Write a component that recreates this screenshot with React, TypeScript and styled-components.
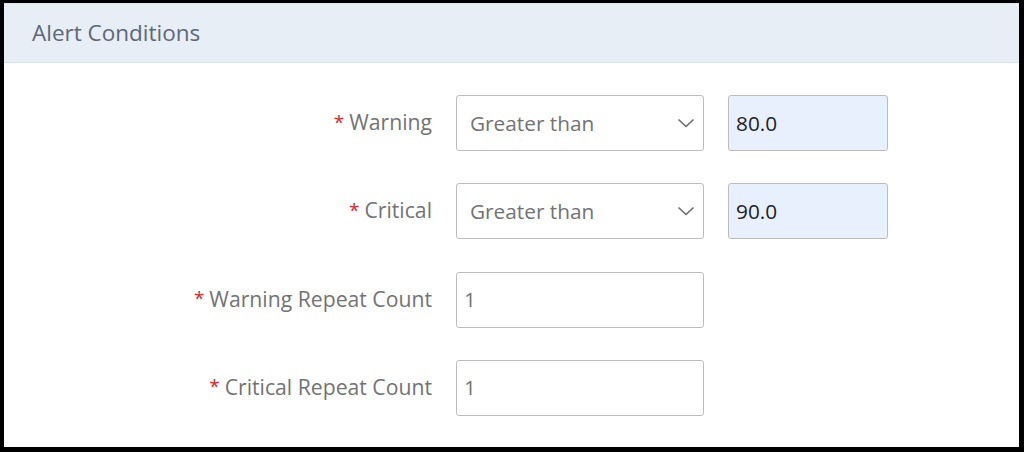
import styled, { createGlobalStyle } from "styled-components";

const GlobalStyle = createGlobalStyle`
  html, body {
    margin: 0;
    padding: 0;
    background: #000000;
  }
  * {
    box-sizing: border-box;
  }
`;

const Frame = styled.div`
  width: 1024px;
  height: 452px;
  padding: 3px 5px 5px 4px;
  background: #000000;
`;

const Panel = styled.div`
  height: 100%;
  background: #ffffff;
  display: flex;
  flex-direction: column;
  font-family: "Open Sans", "Noto Sans", sans-serif;
`;

const Header = styled.div`
  height: 60px;
  display: flex;
  align-items: center;
  padding-left: 28px;
  padding-bottom: 1px;
  background: #e8eef5;
  border-top: 1px solid #dfe6ef;
  border-bottom: 1px solid #dae1ea;
  font-size: 22.5px;
  color: #5d6877;
`;

const Form = styled.div`
  display: grid;
  grid-template-columns: 428px 248px 160px;
  grid-auto-rows: 56px;
  column-gap: 24px;
  row-gap: 32.3px;
  padding-top: 32px;
`;

const Label = styled.div`
  display: flex;
  align-items: center;
  justify-content: flex-end;
  font-size: 21.2px;
  color: #737373;
  padding-bottom: 3px;
`;

const Star = styled.span`
  color: #e0242b;
  margin-right: 5px;
  font-size: 19px;
`;

const Field = styled.div<{ $filled?: boolean; $pad?: number }>`
  display: flex;
  align-items: center;
  justify-content: space-between;
  border: 1px solid #bcbcbc;
  border-radius: 3px;
  padding: 0 8px 1px ${(p) => p.$pad ?? 7}px;
  background: ${(p) => (p.$filled ? "#e8f0fe" : "#ffffff")};
  font-size: 20.8px;
  color: ${(p) => (p.$filled ? "#222222" : "#737373")};
`;

const Chevron = () => (
  <svg width="18" height="18" viewBox="0 0 18 18" fill="none">
    <path d="M1.5 5.5 L9 12.5 L16.5 5.5" stroke="#6b6b6b" strokeWidth="1.6" />
  </svg>
);

const rows = [
  { label: "Warning", select: "Greater than", value: "80.0" },
  { label: "Critical", select: "Greater than", value: "90.0" },
  { label: "Warning Repeat Count", count: "1" },
  { label: "Critical Repeat Count", count: "1" },
];

const App = () => {
  return (
    <Frame>
      <GlobalStyle />
      <Panel>
        <Header>Alert Conditions</Header>
        <Form>
          {rows.map((row) => (
            <>
              <Label key={row.label}>
                <Star>*</Star>
                {row.label}
              </Label>
              {row.select ? (
                <>
                  <Field $pad={13}>
                    {row.select}
                    <Chevron />
                  </Field>
                  <Field $filled>{row.value}</Field>
                </>
              ) : (
                <>
                  <Field>{row.count}</Field>
                  <div />
                </>
              )}
            </>
          ))}
        </Form>
      </Panel>
    </Frame>
  );
};

export default App;
